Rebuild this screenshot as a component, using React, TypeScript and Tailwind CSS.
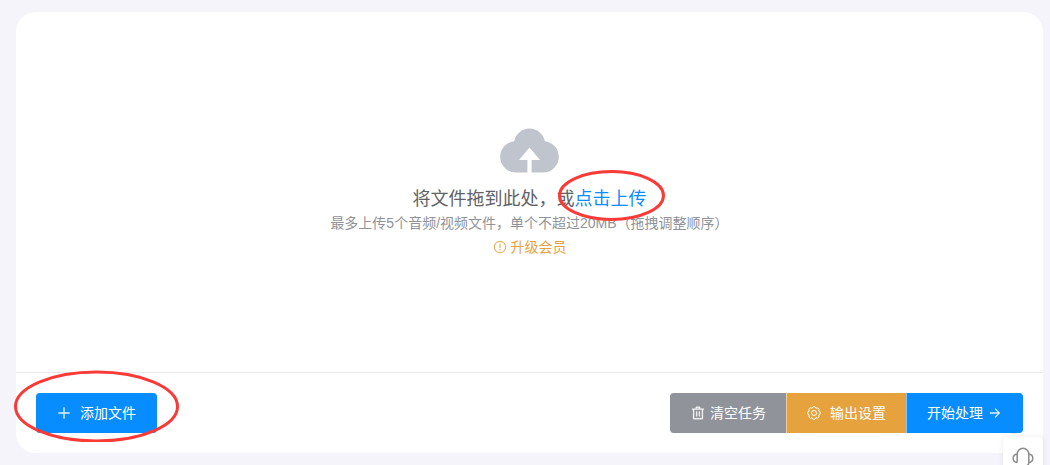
import type { ReactNode } from 'react';

const ICONS = {
  upload:
    'M544 864V672h128L512 480 352 672h128v192H320v-1.6c-5.376.32-10.496 1.6-16 1.6A240 240 0 0 1 64 624c0-123.136 93.12-223.488 212.608-237.248A239.808 239.808 0 0 1 512 192a239.872 239.872 0 0 1 235.456 194.752c119.488 13.76 212.48 114.112 212.48 237.248a240 240 0 0 1-240 240c-5.376 0-10.56-1.28-16-1.6v1.6H544z',
  plus: 'M480 480V128a32 32 0 0 1 64 0v352h352a32 32 0 1 1 0 64H544v352a32 32 0 1 1-64 0V544H128a32 32 0 0 1 0-64h352z',
  warning:
    'M512 64a448 448 0 1 1 0 896 448 448 0 0 1 0-896zm0 832a384 384 0 0 0 0-768 384 384 0 0 0 0 768zm48-176a48 48 0 1 1-96 0 48 48 0 0 1 96 0zm-48-464a32 32 0 0 1 32 32v288a32 32 0 0 1-64 0V288a32 32 0 0 1 32-32z',
  trash:
    'M160 256H96a32 32 0 0 1 0-64h256V95.936a32 32 0 0 1 32-32h256a32 32 0 0 1 32 32V192h256a32 32 0 1 1 0 64h-64v672a32 32 0 0 1-32 32H192a32 32 0 0 1-32-32V256zm448-64v-64H416v64h192zM224 896h576V256H224v640zm192-128a32 32 0 0 1-32-32V416a32 32 0 0 1 64 0v320a32 32 0 0 1-32 32zm192 0a32 32 0 0 1-32-32V416a32 32 0 0 1 64 0v320a32 32 0 0 1-32 32z',
  right:
    'M754.752 480H160a32 32 0 1 0 0 64h594.752L521.344 777.344a32 32 0 0 0 45.312 45.312l288-288a32 32 0 0 0 0-45.312l-288-288a32 32 0 1 0-45.312 45.312L754.752 480z',
};

function Icon({
  name,
  weight = 24,
  className = 'size-[14px]',
}: {
  name: keyof typeof ICONS;
  weight?: number;
  className?: string;
}) {
  return (
    <svg
      viewBox="0 0 1024 1024"
      fill="currentColor"
      stroke="currentColor"
      strokeWidth={weight}
      aria-hidden="true"
      className={`shrink-0 ${className}`}
    >
      <path d={ICONS[name]} />
    </svg>
  );
}

function GearIcon() {
  return (
    <svg
      viewBox="1 1 14 14"
      fill="none"
      stroke="currentColor"
      strokeWidth="1"
      strokeLinejoin="round"
      aria-hidden="true"
      className="size-[14px] shrink-0"
    >
      <path d="M12.71 6.05A1.98 1.98 0 0 1 12.71 9.95A1.98 1.98 0 0 1 9.95 12.71A1.98 1.98 0 0 1 6.05 12.71A1.98 1.98 0 0 1 3.29 9.95A1.98 1.98 0 0 1 3.29 6.05A1.98 1.98 0 0 1 6.05 3.29A1.98 1.98 0 0 1 9.95 3.29A1.98 1.98 0 0 1 12.71 6.05Z" />
      <circle cx="8" cy="8" r="2.5" />
    </svg>
  );
}

function Button({ className, children }: { className: string; children: ReactNode }) {
  return (
    <button type="button" className={`flex h-10 cursor-pointer items-center px-5 text-sm text-white ${className}`}>
      {children}
    </button>
  );
}

export default function App() {
  return (
    <div className="flex min-h-screen flex-col bg-[#f5f4fb] pt-3 pr-[7px] pb-3 pl-4 font-['Liberation_Sans','Noto_Sans_CJK_SC',sans-serif]">
      <main className="flex flex-1 flex-col rounded-[20px] bg-white">
        <section className="flex flex-1 flex-col items-center justify-center pb-[10px] text-center">
          <Icon name="upload" weight={0} className="size-[67px] text-[#c0c4cc]" />
          <p className="mt-1 text-lg leading-6 text-[#606266]">
            将文件拖到此处，或
            <span className="relative inline-block">
              <a href="#upload" className="text-[#078dff]">
                点击上传
              </a>
              <svg
                viewBox="0 0 107 51"
                fill="none"
                aria-hidden="true"
                className="pointer-events-none absolute top-[-17px] left-[-17px] h-[51px] w-[107px] max-w-none"
              >
                <ellipse cx="53.5" cy="25.5" rx="52" ry="24" stroke="#f93a37" strokeWidth="3" />
              </svg>
            </span>
          </p>
          <p className="text-sm leading-6 text-[#909399]">
            最多上传5个音频/视频文件，单个不超过20MB（拖拽调整顺序）
          </p>
          <a href="#vip" className="flex items-center gap-1 text-sm leading-6 text-[#e6a23c]">
            <Icon name="warning" weight={8} />
            升级会员
          </a>
        </section>

        <footer className="flex items-center justify-between border-t border-[#e8e8f0] p-5">
          <div className="relative">
            <Button className="gap-[9px] rounded border-x border-[#078dff] bg-[#078dff]">
              <Icon name="plus" />
              添加文件
            </Button>
            <svg
              viewBox="0 0 165 72"
              fill="none"
              aria-hidden="true"
              className="pointer-events-none absolute top-[-23px] left-[-22px] h-[72px] w-[165px] max-w-none"
            >
              <ellipse cx="82.5" cy="36.5" rx="81" ry="34.5" stroke="#f93a37" strokeWidth="3" />
            </svg>
          </div>
          <div className="flex">
            <Button className="gap-[5px] rounded-l border-l border-[#909399] bg-[#909399]">
              <Icon name="trash" />
              清空任务
            </Button>
            <Button className="gap-[9px] border-l border-[#f2d09d] bg-[#e6a23c]">
              <GearIcon />
              输出设置
            </Button>
            <Button className="gap-[5px] rounded-r border-x border-r-[#078dff] border-l-[#83c6ff] bg-[#078dff]">
              开始处理
              <Icon name="right" />
            </Button>
          </div>
        </footer>
      </main>

      <button
        type="button"
        aria-label="客服"
        className="fixed right-[7px] bottom-[-12px] flex size-10 items-center justify-center rounded bg-white text-[#8c8c8c] shadow-[0_0_6px_rgba(0,0,0,0.08)]"
      >
        <svg viewBox="0 0 24 24" fill="none" stroke="currentColor" strokeWidth="1.5" aria-hidden="true" className="size-6">
          <path d="M6.2 17.5V9.2a5.8 6 0 0 1 11.6 0v8.3c0 2-1.4 3.3-3.6 3.3" />
          <path d="M6.2 8.9C4 9.2 2.2 10.8 2.2 13.2S4 17.2 6.2 17.5" />
          <path d="M17.8 8.9c2.2.3 4 1.9 4 4.3s-1.8 4-4 4.3" />
        </svg>
      </button>
    </div>
  );
}
